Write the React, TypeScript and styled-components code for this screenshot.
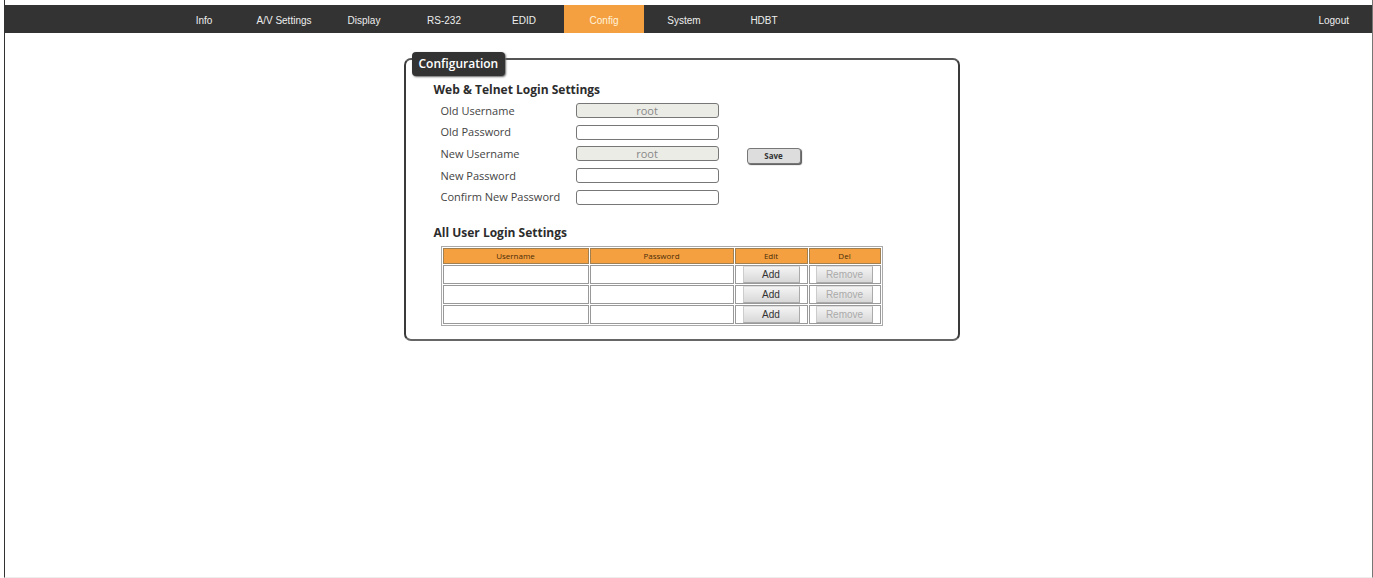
import React from "react";
import styled, { createGlobalStyle } from "styled-components";

const GlobalStyle = createGlobalStyle`
  *, *::before, *::after { box-sizing: border-box; }
  body {
    margin: 0;
    background: #fff;
    color: #333;
    font-family: "Open Sans", "Noto Sans", sans-serif;
  }
`;

const Frame = styled.div`
  min-height: 100vh;
  margin-left: 4px;
  padding-top: 5px;
  border-left: 1px solid #333;
  border-right: 1px solid #777;
  border-bottom: 1px solid #eee;
`;

const NavBar = styled.nav`
  display: flex;
  align-items: stretch;
  height: 28px;
  padding: 0 23px 0 159px;
  background: #333;
  font-family: "Liberation Sans", Arial, sans-serif;
  font-size: 10px;
`;

const NavLink = styled.a<{ $active?: boolean }>`
  display: flex;
  align-items: center;
  justify-content: center;
  width: 80px;
  padding-top: 2px;
  color: ${(p) => (p.$active ? "#fff3dc" : "#eee")};
  background: ${(p) => (p.$active ? "#f5a040" : "transparent")};
  text-decoration: none;
`;

const LogoutLink = styled(NavLink)`
  width: auto;
  margin-left: auto;
`;

const Main = styled.main`
  padding: 25px 14px 0 0;
`;

const Panel = styled.section`
  max-width: 556px;
  margin: 0 auto;
  padding: 0 27px 13px 28px;
  border: 2px solid #3a3a3a;
  border-bottom-color: #666;
  border-top-color: #555;
  border-radius: 7px;
`;

const PanelTitle = styled.h2`
  width: fit-content;
  height: 24px;
  margin: -8px 0 5px -22px;
  padding: 0 7px;
  border-radius: 4px;
  background: #333;
  box-shadow: 1px 1px 2px #666;
  color: #fff;
  font-size: 12px;
  font-weight: 600;
  line-height: 24px;
`;

const SectionTitle = styled.h3`
  margin: 0;
  color: #2c2c2c;
  font-size: 12px;
  font-weight: 700;
  line-height: 18px;
`;

const LoginForm = styled.form`
  display: flex;
  align-items: center;
  gap: 28px;
  margin: 1px 0 16px;
  padding-left: 7px;
`;

const Fields = styled.div`
  display: grid;
  grid-template-rows: repeat(5, 1fr);
  height: 108px;
`;

const Field = styled.div`
  display: flex;
  align-items: center;
`;

const FieldLabel = styled.label`
  width: 135px;
  color: #444;
  font-size: 11px;
  line-height: 16px;
`;

const TextInput = styled.input`
  width: 143px;
  height: 15px;
  padding: 0 4px;
  border: 1px solid #777;
  border-radius: 3px;
  background: #fff;
  font-family: inherit;
  font-size: 11px;
  line-height: 13px;
  text-align: center;

  &:disabled {
    background: #ecece6;
    color: #888;
  }
`;

const SaveButton = styled.button`
  width: 54px;
  height: 16px;
  margin-top: 3px;
  padding: 0;
  border: 1px solid #777;
  border-radius: 3px;
  background: #ddd;
  box-shadow: 1px 1px 1px #555;
  color: #333;
  font-family: inherit;
  font-size: 8px;
  font-weight: 700;
  line-height: 14px;
`;

const UserTable = styled.table`
  width: 442px;
  margin: 4px 0 0 7px;
  border: 1px solid #aaa;
  border-collapse: separate;
  border-spacing: 1px;
  table-layout: fixed;
`;

const HeadCell = styled.th<{ $width?: number }>`
  width: ${(p) => (p.$width ? `${p.$width}px` : "auto")};
  height: 16px;
  padding: 0;
  border: 1px solid #a08050;
  background: #f5a040;
  color: #4a2c08;
  font-size: 8px;
  font-weight: 400;
  line-height: 12px;
`;

const Cell = styled.td`
  height: 19px;
  padding: 0;
  border: 1px solid #999;
  font-size: 10px;
  line-height: 0;
  text-align: center;
`;

const RowButton = styled.button`
  width: 57px;
  height: 17px;
  padding: 0;
  border: 1px solid #aaa;
  border-top-color: #ddd;
  border-left-color: #ccc;
  background: linear-gradient(#f4f4f4, #d8d8d8);
  color: #333;
  font-family: "Liberation Sans", Arial, sans-serif;
  font-size: 10px;
  line-height: 15px;
  vertical-align: top;

  &:disabled {
    color: #aaa;
  }
`;

const navItems = ["Info", "A/V Settings", "Display", "RS-232", "EDID", "Config", "System", "HDBT"];

const fields = [
  { id: "old-username", label: "Old Username", type: "text", value: "root" },
  { id: "old-password", label: "Old Password", type: "password" },
  { id: "new-username", label: "New Username", type: "text", value: "root" },
  { id: "new-password", label: "New Password", type: "password" },
  { id: "confirm-password", label: "Confirm New Password", type: "password" },
];

const columns = [
  { name: "Username", width: 146 },
  { name: "Password", width: 144 },
  { name: "Edit", width: 73 },
  { name: "Del" },
];

export default function App() {
  return (
    <>
      <GlobalStyle />
      <Frame>
        <NavBar>
          {navItems.map((item) => (
            <NavLink key={item} href="#" $active={item === "Config"}>
              {item}
            </NavLink>
          ))}
          <LogoutLink href="#">Logout</LogoutLink>
        </NavBar>
        <Main>
          <Panel>
            <PanelTitle>Configuration</PanelTitle>
            <SectionTitle>Web &amp; Telnet Login Settings</SectionTitle>
            <LoginForm onSubmit={(e) => e.preventDefault()}>
              <Fields>
                {fields.map((f) => (
                  <Field key={f.id}>
                    <FieldLabel htmlFor={f.id}>{f.label}</FieldLabel>
                    <TextInput id={f.id} type={f.type} defaultValue={f.value} disabled={Boolean(f.value)} />
                  </Field>
                ))}
              </Fields>
              <SaveButton type="submit">Save</SaveButton>
            </LoginForm>
            <SectionTitle>All User Login Settings</SectionTitle>
            <UserTable>
              <thead>
                <tr>
                  {columns.map((c) => (
                    <HeadCell key={c.name} scope="col" $width={c.width}>
                      {c.name}
                    </HeadCell>
                  ))}
                </tr>
              </thead>
              <tbody>
                {[1, 2, 3].map((row) => (
                  <tr key={row}>
                    <Cell />
                    <Cell />
                    <Cell>
                      <RowButton type="button">Add</RowButton>
                    </Cell>
                    <Cell>
                      <RowButton type="button" disabled>
                        Remove
                      </RowButton>
                    </Cell>
                  </tr>
                ))}
              </tbody>
            </UserTable>
          </Panel>
        </Main>
      </Frame>
    </>
  );
}
